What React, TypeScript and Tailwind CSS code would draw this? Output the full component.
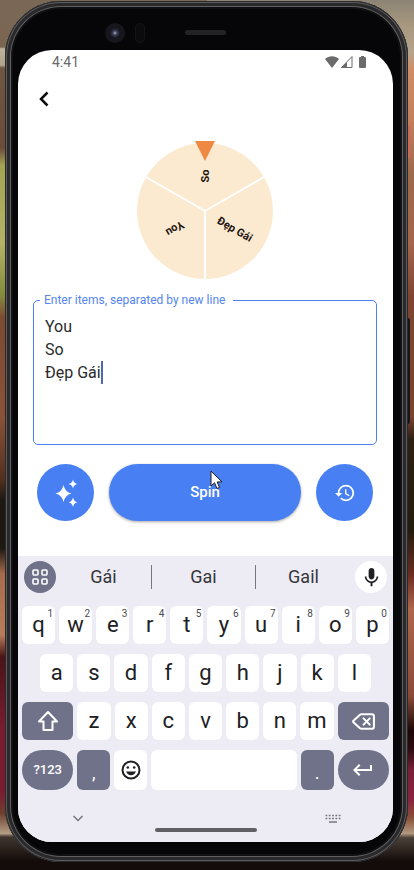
import React, { useState } from "react";
import { Delete } from "lucide-react";
import { MdHistory, MdKeyboardReturn, MdMic } from "react-icons/md";

const DIGIT_ROW = ["q", "w", "e", "r", "t", "y", "u", "i", "o", "p"];
const MIDDLE_ROW = ["a", "s", "d", "f", "g", "h", "j", "k", "l"];
const LOWER_ROW = ["z", "x", "c", "v", "b", "n", "m"];

function Wallpaper() {
  return (
    <div aria-hidden="true" className="absolute inset-0 flex">
      <div className="flex-1 bg-[linear-gradient(to_bottom,#7a6856_0%,#7a6551_5.4%,#bdb29c_5.6%,#b0a48c_7.5%,#705642_7.8%,#6b4c3a_17%,#a3a452_19%,#b5b268_28%,#848a3c_34%,#7c4a32_36.5%,#8a5238_48%,#54301f_55%,#1d1812_57.5%,#1d1812_63%,#a86c4c_66%,#b87c58_73%,#4a1418_75.5%,#7a1c30_84%,#7a1c30_91%,#6e4030_93.5%,#b39d84_95.8%,#40352f_96.2%,#140c0a_99%)]" />
      <div className="flex-1 bg-[linear-gradient(to_bottom,#8c8474_0%,#a89880_3%,#b5a48c_6%,#d08c66_8%,#c47e5c_14%,#9c6a4c_20%,#a4664c_28%,#7e4632_34%,#7a4230_48%,#2a2014_50.5%,#251c10_61%,#6a2c20_66%,#b0664a_70%,#8a4a38_80%,#1c0808_84%,#2a0a10_86%,#7a2038_88.5%,#8a2440_92%,#8a5038_94%,#b09880_95.8%,#4a4038_96.3%,#140c0a_99%)]" />
    </div>
  );
}

function StatusBar() {
  return (
    <div className="flex h-6 items-center justify-between pr-6 pl-[34px] text-[#6b6b6b]">
      <span className="text-sm">4:41</span>
      <svg width="44" height="14" viewBox="0 0 44 14" aria-label="Wi-Fi, signal and battery">
        <path d="M0 4 C4 0.4 10 0.4 14 4 L7 13 Z" fill="currentColor" />
        <path d="M27 1.5 V12.5 H16.5 Z" fill="none" stroke="currentColor" strokeWidth="1" />
        <path d="M22 7 V13 H15.5 Z" fill="currentColor" />
        <path d="M34 3 Q34 2 35 2 H36 V1 H39 V2 H40 Q41 2 41 3 V12 Q41 13 40 13 H35 Q34 13 34 12 Z" fill="currentColor" />
      </svg>
    </div>
  );
}

function Wheel() {
  return (
    <svg width="138" height="138" viewBox="0 0 138 138" className="mx-auto block font-[Roboto,sans-serif] text-[11px] font-bold">
      <circle cx="69" cy="70" r="68" fill="#fcead0" />
      <path d="M69 70 V138 M69 70 L10 36 M69 70 L128 36" stroke="#fff" strokeWidth="2" />
      <path d="M59 0 H79 L69 20 Z" fill="#ef8843" />
      <g fill="#1c1510" textAnchor="middle">
        <text x="0" y="4" transform="translate(69 35) rotate(-90)">So</text>
        <text x="0" y="4" transform="translate(99 88) rotate(30)">Đẹp Gái</text>
        <text x="0" y="4" transform="translate(39 88) rotate(150)">You</text>
      </g>
    </svg>
  );
}

function SparkleIcon() {
  return (
    <svg width="26" height="28" viewBox="0 0 26 28" fill="#fff">
      <path d="M10.5 6 Q12 13 18.5 14.5 Q12 16 10.5 23 Q9 16 2.5 14.5 Q9 13 10.5 6 Z" />
      <path d="M20 0.500 Q20.700 4.300 24.500 5 Q20.700 5.700 20 9.500 Q19.300 5.700 15.500 5 Q19.300 4.300 20 0.500 Z" />
      <path d="M20 18.500 Q20.800 22.500 24.500 23.300 Q20.800 24.100 20 28 Q19.200 24.100 15.500 23.300 Q19.200 22.500 20 18.500 Z" />
    </svg>
  );
}

function MousePointer() {
  return (
    <svg width="13" height="20" viewBox="0 0 13 20" className="pointer-events-none absolute top-1.5 left-[101px]">
      <path d="M1 1 V16 L4.500 12.800 L7 18.500 L9.500 17.400 L7.200 11.900 H12 Z" fill="#fff" stroke="#1c1c24" strokeWidth="1" />
    </svg>
  );
}

function LetterKey({ letter, hint }: { letter: string; hint?: number }) {
  return (
    <button
      type="button"
      className="relative flex h-[38px] min-w-0 flex-1 items-center justify-center rounded-md bg-white text-[22px] leading-6 text-[#202024]"
    >
      {letter}
      {hint !== undefined && (
        <span className="absolute top-0.5 right-0.5 text-[10px] leading-3 text-[#4a4a50]">{hint}</span>
      )}
    </button>
  );
}

function Keyboard() {
  return (
    <section aria-label="Keyboard" className="bg-[#edebf4] text-[#202024]">
      <div className="flex h-[50px] items-start px-1.5 pt-[5px]">
        <button type="button" aria-label="Tools" className="flex size-8 items-center justify-center rounded-full bg-[#70728a]">
          <svg width="16" height="16" viewBox="0 0 16 16" fill="none" stroke="#fff" strokeWidth="1.600">
            <rect x="1" y="1" width="5" height="5" rx="1" />
            <rect x="10" y="1" width="5" height="5" rx="1" />
            <rect x="1" y="10" width="5" height="5" rx="1" />
            <rect x="10" y="10" width="5" height="5" rx="1" />
          </svg>
        </button>
        <div className="flex h-8 flex-1 items-center pr-1 text-lg text-[#36363a]">
          <button type="button" className="flex-1">Gái</button>
          <span className="h-6 w-px bg-[#77767c]" />
          <button type="button" className="w-[103px]">Gai</button>
          <span className="h-6 w-px bg-[#77767c]" />
          <button type="button" className="flex-1">Gail</button>
        </div>
        <button type="button" aria-label="Voice input" className="flex size-8 items-center justify-center rounded-full bg-white">
          <MdMic size={23} />
        </button>
      </div>

      <div className="flex flex-col gap-2.5 px-1">
        <div className="flex gap-1">
          {DIGIT_ROW.map((letter, i) => (
            <LetterKey key={letter} letter={letter} hint={(i + 1) % 10} />
          ))}
        </div>
        <div className="flex gap-1 px-[18px]">
          {MIDDLE_ROW.map((letter) => (
            <LetterKey key={letter} letter={letter} />
          ))}
        </div>
        <div className="flex gap-1">
          <button type="button" aria-label="Shift" className="flex w-[14%] items-center justify-center rounded-md bg-[#70728a]">
            <svg width="22" height="22" viewBox="0 0 22 22" fill="none" stroke="#fff" strokeWidth="2" strokeLinejoin="round">
              <path d="M11 2 L20 11.500 H15.500 V20 H6.500 V11.500 H2 Z" />
            </svg>
          </button>
          {LOWER_ROW.map((letter) => (
            <LetterKey key={letter} letter={letter} />
          ))}
          <button type="button" aria-label="Backspace" className="flex w-[14%] items-center justify-center rounded-md bg-[#70728a] text-white">
            <Delete size={25} strokeWidth={2} />
          </button>
        </div>
        <div className="flex h-10 gap-1 text-white">
          <button type="button" className="w-[14%] rounded-full bg-[#70728a] text-[13px] font-medium">?123</button>
          <button type="button" className="w-[9%] rounded-md bg-[#70728a] pt-1.5 text-lg">,</button>
          <button type="button" aria-label="Emoji" className="flex w-[9%] items-center justify-center rounded-md bg-white">
            <svg width="20" height="20" viewBox="0 0 20 20" fill="#202024">
              <circle cx="10" cy="10" r="8.500" fill="none" stroke="#202024" strokeWidth="2" />
              <circle cx="6.800" cy="7.500" r="1.300" />
              <circle cx="13.200" cy="7.500" r="1.300" />
              <path d="M5 11.500 H15 Q13.500 15.200 10 15.200 Q6.500 15.200 5 11.500 Z" />
            </svg>
          </button>
          <button type="button" aria-label="Space" className="flex-1 rounded-md bg-white" />
          <button type="button" className="w-[9%] rounded-md bg-[#70728a] pt-1.5 text-lg">.</button>
          <button type="button" aria-label="Enter" className="flex w-[14%] items-center justify-center rounded-full bg-[#70728a]">
            <MdKeyboardReturn size={24} />
          </button>
        </div>
      </div>

      <div className="flex h-[52px] items-start justify-between px-[52px] pt-5">
        <button type="button" aria-label="Hide keyboard">
          <svg width="16" height="16" viewBox="0 0 16 16" fill="none" stroke="#77767c" strokeWidth="1.500">
            <path d="M3.500 6 L8 10.500 L12.500 6" />
          </svg>
        </button>
        <span className="mt-[18px] h-1 w-[102px] rounded-full bg-[#616164]" />
        <button type="button" aria-label="Switch keyboard">
          <svg width="16" height="16" viewBox="0 0 16 16" stroke="#77767c" strokeWidth="1.400">
            <path d="M0.500 5.500 H15.500 M0.500 8.500 H15.500" strokeDasharray="1.800 1.500" />
            <path d="M4 12 H12" />
          </svg>
        </button>
      </div>
    </section>
  );
}

export default function App() {
  const [items, setItems] = useState("You\nSo\nĐẹp Gái");

  return (
    <div className="relative min-h-screen overflow-hidden bg-[#140c0a] pt-px pr-1.5 pb-2 pl-[5px] font-[Roboto,'Liberation_Sans',sans-serif]">
      <Wallpaper />
      <span className="absolute top-[126px] right-1 h-8 w-1 bg-[#c96a58]" />
      <span className="absolute top-[318px] right-1 h-[106px] w-1 rounded-sm bg-[#17171a]" />

      <div className="relative rounded-[56px] bg-[#060608] pr-[15px] pb-5 pl-[13px] shadow-[inset_0_0_0_1px_#29292b,inset_0_0_0_2px_#5c5c5f,inset_0_0_0_5px_#29292b,inset_0_0_0_6px_#606062,inset_0_0_0_8px_#101012]">
        <div className="grid h-[49px] grid-cols-[1fr_auto_1fr] items-center pt-3.5">
          <div className="flex justify-end gap-2.5 pr-10">
            <span className="flex size-5 items-center justify-center rounded-full bg-[#17161c]">
              <span className="size-2.5 rounded-full bg-[radial-gradient(circle,#a8acc0_0%,#3a3f55_30%,#14141c_75%)]" />
            </span>
            <span className="h-5 w-2.5 rounded-full border border-[#151418] bg-[#0b0a0d]" />
          </div>
          <span className="h-[5px] w-[41px] rounded-full bg-[#232325]" />
        </div>

        <div className="overflow-hidden rounded-[34px] bg-white">
          <StatusBar />

          <header className="flex h-[50px] items-center px-[18px]">
            <button type="button" aria-label="Back">
              <svg width="16" height="16" viewBox="0 0 16 16" fill="none" stroke="#0c0c0c" strokeWidth="2.500">
                <path d="M11.500 1.500 L5 8 L11.500 14.500" />
              </svg>
            </button>
          </header>

          <main className="pt-[17px] pr-4 pb-[35px] pl-[15px]">
            <Wheel />

            <div className="relative mt-[21px]">
              <label htmlFor="items" className="absolute -top-2 left-[7px] bg-white pr-2 pl-1 text-xs text-[#5585ee]">
                Enter items, separated by new line
              </label>
              <textarea
                id="items"
                value={items}
                onChange={(e) => setItems(e.target.value)}
                className="block h-[145px] w-full resize-none rounded-[5px] border border-[#4d80f0] px-[11px] py-3.5 text-base leading-[23px] text-[#2a2a2c] outline-none"
              />
              <span className="pointer-events-none absolute top-[61px] left-[68px] h-[23px] w-0.5 bg-[#5069ad]" />
            </div>

            <div className="mt-[19px] flex gap-[15px] px-1">
              <button type="button" aria-label="Suggest items" className="flex size-[57px] items-center justify-center rounded-full bg-[#4880f4]">
                <SparkleIcon />
              </button>
              <button type="button" className="relative h-[57px] flex-1 rounded-full bg-[#4880f4] text-[15px] font-medium text-white shadow-[0_1px_3px_rgba(0,0,0,0.35)]">
                Spin
                <MousePointer />
              </button>
              <button type="button" aria-label="History" className="flex size-[57px] items-center justify-center rounded-full bg-[#4880f4] text-white">
                <MdHistory size={22} />
              </button>
            </div>
          </main>

          <Keyboard />
        </div>
      </div>
    </div>
  );
}
